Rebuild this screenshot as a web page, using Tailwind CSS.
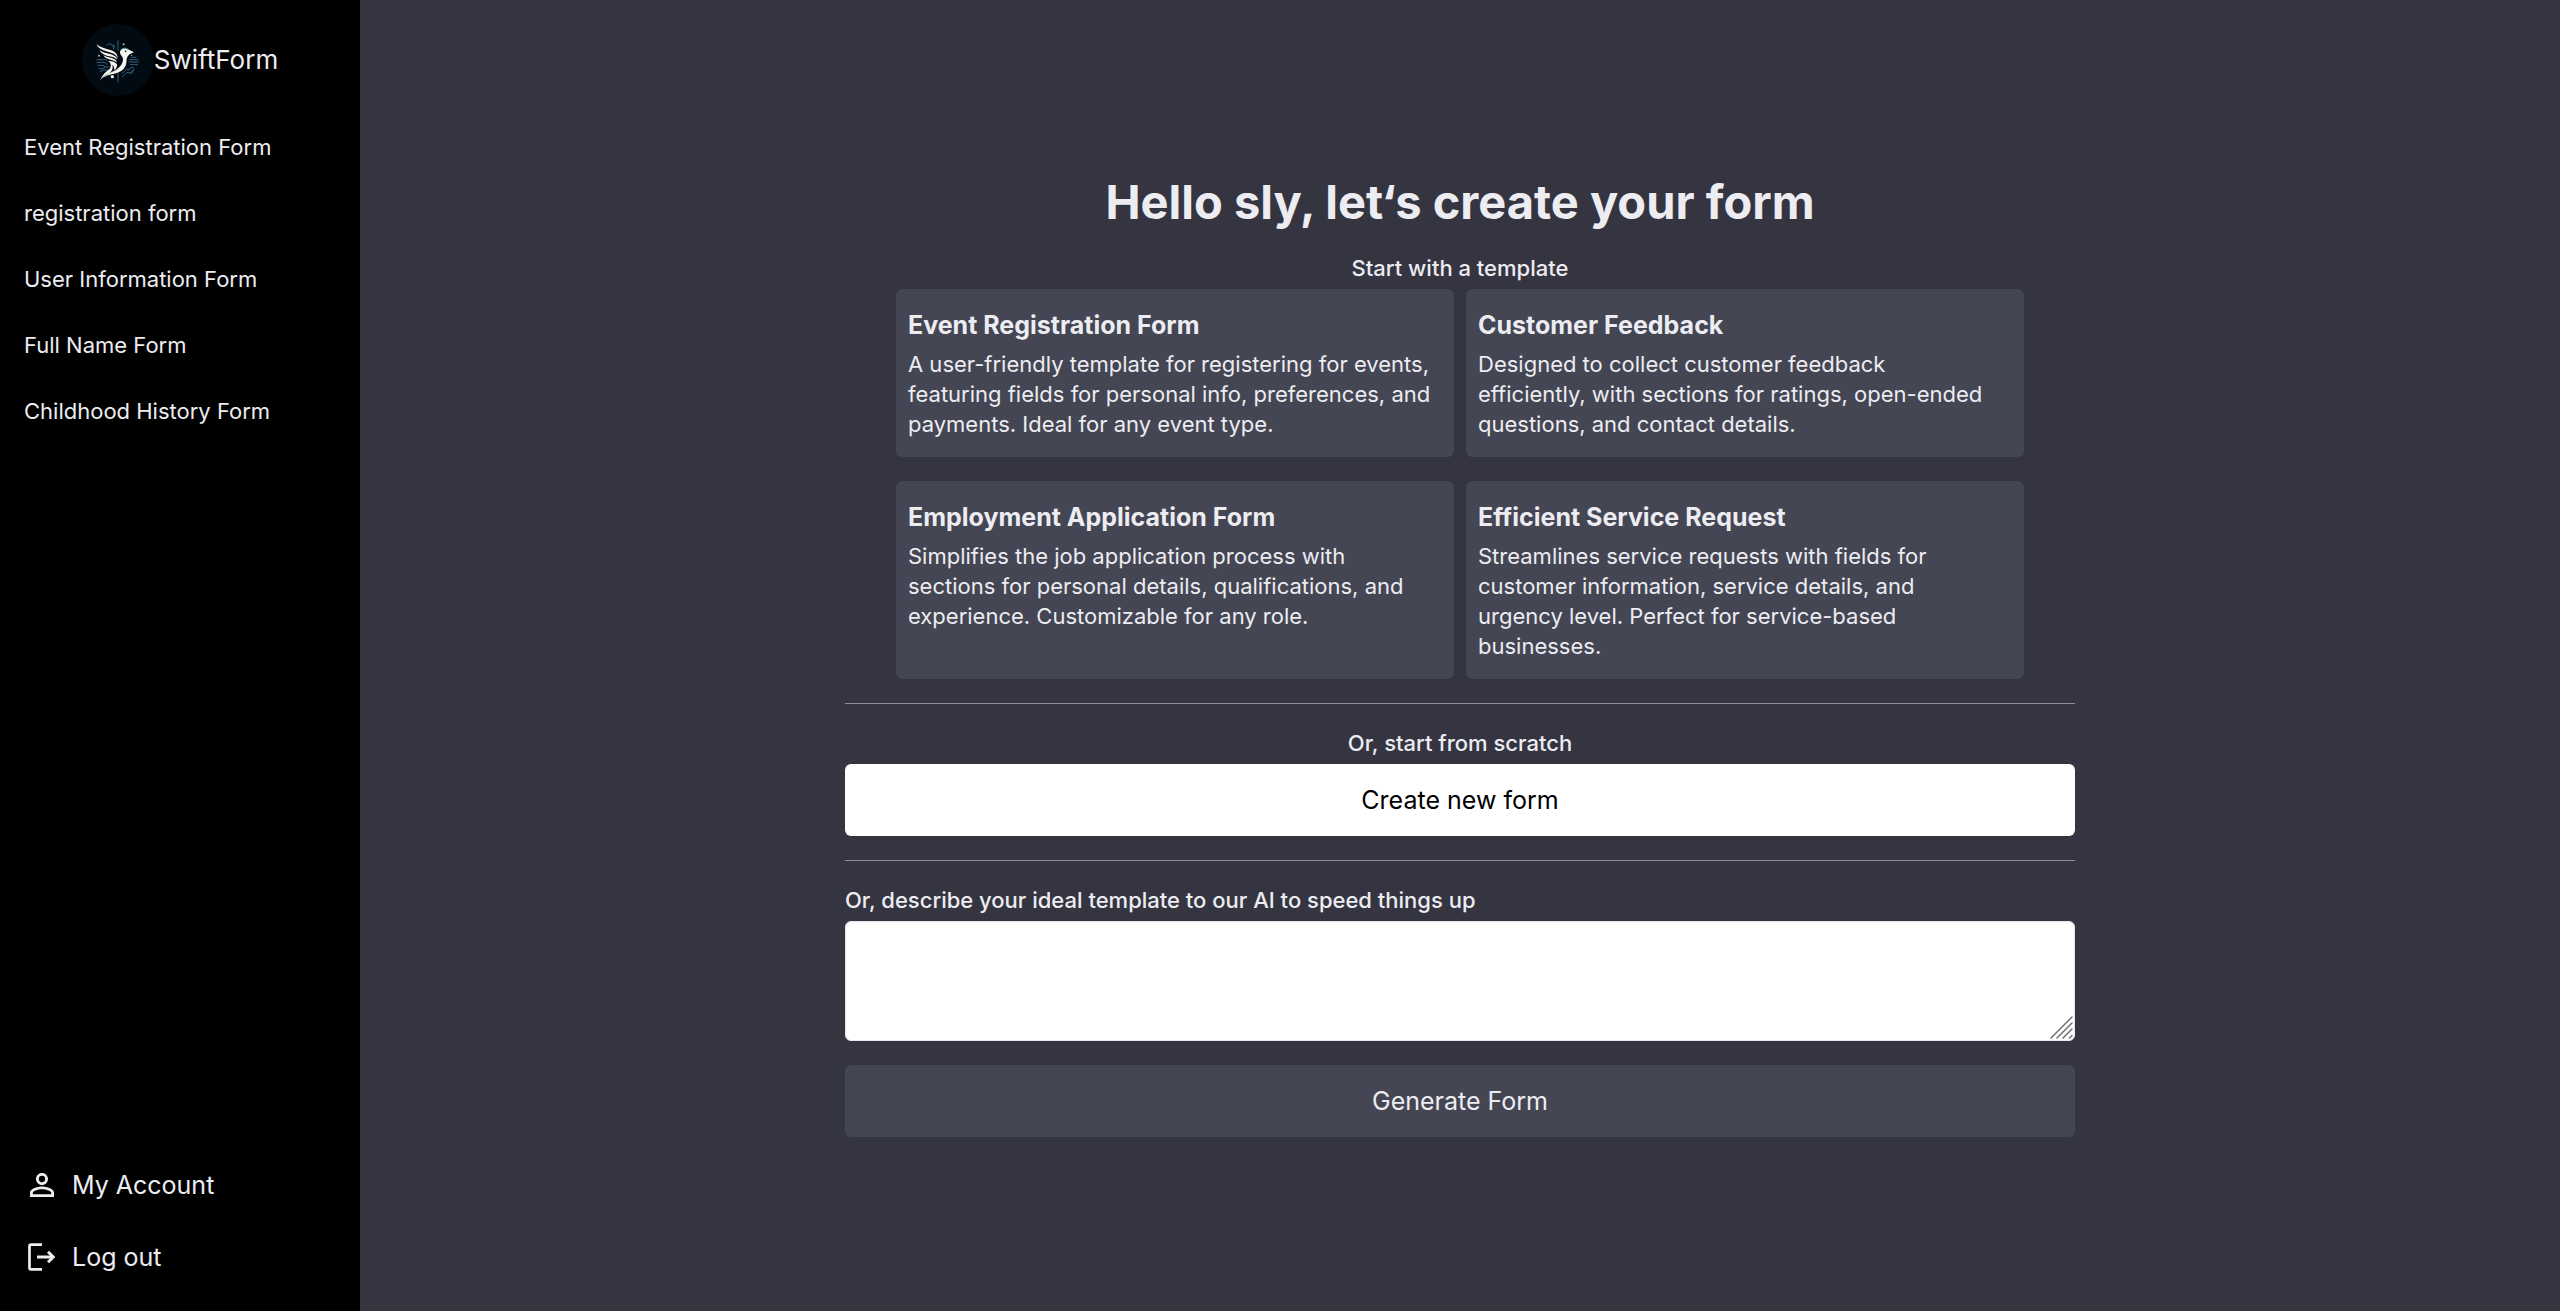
<!DOCTYPE html>
<html lang="en">
<head>
<meta charset="utf-8">
<meta name="viewport" content="width=device-width, initial-scale=1">
<title>SwiftForm</title>
<script src="https://cdn.jsdelivr.net/npm/@tailwindcss/browser@4"></script>
</head>
<body class="flex min-h-screen bg-[#343541] font-['Inter',sans-serif] text-[22px] leading-[30px] text-[#ececf1]">

  <!-- Sidebar -->
  <aside class="flex w-[360px] shrink-0 flex-col bg-black py-[18px]">
    <a href="#" class="flex items-center justify-center pt-1.5 text-[26px]">
      <svg class="size-[72px]" viewBox="3 12 216 216" aria-hidden="true">
        <circle cx="111" cy="120" r="108" fill="#020a12"/>
        <g fill="none" stroke="#34627e" stroke-width="3" stroke-linecap="round">
          <path d="M111 62v28M111 160v26M98 74v12M78 76l5-5 7 1 4 6 8 2"/>
          <path d="M48 119h26l6 5M48 127h22l8 6M50 136h16l8 5h10M54 146h12l5-4M58 155l8-5h14"/>
          <path d="M150 112h15M146 119h25M144 126h28M148 134h22M122 162l14-14 8 2 6-8 8 2M124 171l14-14 10 2 10-10M150 162l8-12"/>
        </g>
        <g fill="#9cc0d4">
          <circle cx="128" cy="73" r="3"/><circle cx="54" cy="107" r="3"/><circle cx="94" cy="170" r="5" fill="#e9eef0"/><circle cx="152" cy="106" r="2"/>
        </g>
        <g fill="#f4f3ee">
          <path d="M46 73c12 10 28 13 42 17 13 4 22 12 22 24-5-10-14-15-26-18-16-4-31-9-38-23z"/>
          <path d="M56 90c10 8 22 10 34 13 10 3 17 8 19 16-8-7-14-8-24-10-13-3-25-8-29-19z"/>
          <path d="M67 106c9 5 17 6 25 8 8 2 14 6 16 13-7-5-12-6-19-8-9-2-18-5-22-13z"/>
          <path d="M82 122c12 1 22 4 26 11 1 8-3 14-8 19 1-9-2-14-6-18 3 9 0 18-8 25-13 6-21 12-29 22 8-17 17-26 28-33 7-8 6-18-3-26z"/>
          <path d="M159 97l-18-9c-11-7-24-2-24 9 0 9 9 12 9 21 0 13-9 23-22 33-17 7-29 13-40 24 8-6 17-10 28-12 23-4 38-14 43-29 3-10 0-16 4-23 4-7 11-12 20-14z"/>
        </g>
        <path d="M118 91c4-9 18-11 26-2-9-3-17-3-26 2z" fill="#5d91ad"/>
        <circle cx="134" cy="94" r="2.500" fill="#020a12"/>
      </svg>
      <span>SwiftForm</span>
    </a>

    <nav class="mt-[18px] flex flex-col" aria-label="Forms">
      <a href="#" class="px-6 py-[18px]">Event Registration Form</a>
      <a href="#" class="px-6 py-[18px]">registration form</a>
      <a href="#" class="px-6 py-[18px]">User Information Form</a>
      <a href="#" class="px-6 py-[18px]">Full Name Form</a>
      <a href="#" class="px-6 py-[18px]">Childhood History Form</a>
    </nav>

    <div class="mt-auto flex flex-col text-[25px] leading-[36px]">
      <a href="#" class="flex items-center gap-3 px-6 py-[18px]">
        <svg class="size-9" viewBox="0 0 24 24" fill="currentColor" aria-hidden="true"><path d="M12 5.9a2.1 2.1 0 1 1 0 4.2 2.1 2.1 0 0 1 0-4.2m0 9c2.97 0 6.1 1.46 6.1 2.1v1.1H5.9V17c0-.64 3.13-2.1 6.1-2.1M12 4C9.79 4 8 5.79 8 8s1.79 4 4 4 4-1.79 4-4-1.79-4-4-4zm0 9c-2.67 0-8 1.34-8 4v3h16v-3c0-2.66-5.33-4-8-4z"/></svg>
        <span>My Account</span>
      </a>
      <a href="#" class="flex items-center gap-3 px-6 py-[18px]">
        <svg class="size-9" viewBox="0 0 36 36" fill="none" stroke="currentColor" stroke-width="2.7" aria-hidden="true"><path d="M18 5.7H7q-1.500 0-1.500 1.500v21.600q0 1.500 1.500 1.500h11"/><path d="M13 18h15" stroke-width="3"/><path d="M24 12.800L29.200 18 24 23.200" stroke-width="3"/></svg>
        <span>Log out</span>
      </a>
    </div>
  </aside>

  <!-- Form creation -->
  <main class="flex min-w-0 flex-1 flex-col items-center justify-center">
    <div class="flex w-full max-w-[1230px] flex-col">
      <h1 class="mb-6 text-center text-[47px] leading-[54px] font-bold">Hello sly, let‘s create your form</h1>

      <h2 class="mb-1.5 text-center font-medium">Start with a template</h2>
      <div class="mx-[51px] grid grid-cols-2 gap-x-3 gap-y-6">
        <button type="button" class="flex flex-col rounded-md bg-[#444654] px-3 py-[18px] text-left">
          <span class="mb-1.5 text-[25px] leading-[36px] font-bold">Event Registration Form</span>
          <span>A user-friendly template for registering for events,<br>featuring fields for personal info, preferences, and<br>payments. Ideal for any event type.</span>
        </button>
        <button type="button" class="flex flex-col rounded-md bg-[#444654] px-3 py-[18px] text-left">
          <span class="mb-1.5 text-[25px] leading-[36px] font-bold">Customer Feedback</span>
          <span>Designed to collect customer feedback<br>efficiently, with sections for ratings, open-ended<br>questions, and contact details.</span>
        </button>
        <button type="button" class="flex flex-col rounded-md bg-[#444654] px-3 py-[18px] text-left">
          <span class="mb-1.5 text-[25px] leading-[36px] font-bold">Employment Application Form</span>
          <span>Simplifies the job application process with<br>sections for personal details, qualifications, and<br>experience. Customizable for any role.</span>
        </button>
        <button type="button" class="flex flex-col rounded-md bg-[#444654] px-3 py-[18px] text-left">
          <span class="mb-1.5 text-[25px] leading-[36px] font-bold">Efficient Service Request</span>
          <span>Streamlines service requests with fields for<br>customer information, service details, and<br>urgency level. Perfect for service-based<br>businesses.</span>
        </button>
      </div>

      <hr class="my-6 border-[#8e8ea0]">

      <h2 class="mb-1.5 text-center font-medium">Or, start from scratch</h2>
      <button type="button" class="rounded-md bg-white py-[18px] text-[25px] leading-[36px] text-black">Create new form</button>

      <hr class="my-6 border-[#8e8ea0]">

      <label for="prompt" class="mb-1.5 font-medium">Or, describe your ideal template to our AI to speed things up</label>
      <div class="relative mb-6 flex">
        <textarea id="prompt" class="h-[120px] w-full resize-none rounded-md border border-gray-200 bg-white px-3 py-2 text-black"></textarea>
        <svg class="pointer-events-none absolute right-0 bottom-0 size-[27px]" viewBox="0 0 27 27" fill="none" stroke="#707070" stroke-width="1.5" stroke-linecap="round" aria-hidden="true"><path d="M3 24L24 3M9 24L24 9M15 24l9-9M21.500 24l2.500-2.500"/></svg>
      </div>
      <button type="button" class="rounded-md bg-[#444654] py-[18px] text-[25px] leading-[36px]">Generate Form</button>
    </div>
  </main>
</body>
</html>
